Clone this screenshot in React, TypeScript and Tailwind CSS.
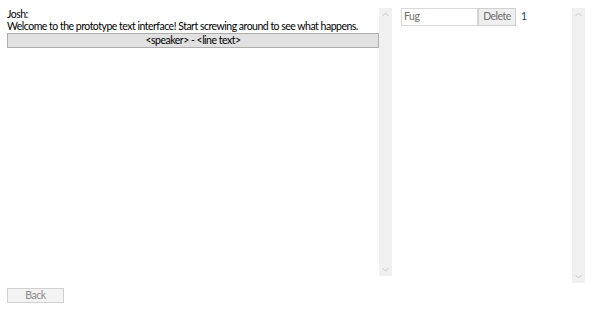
import React from "react";

const ScrollBar = ({ className }: { className: string }) => (
  <div className={`flex flex-col justify-between items-center bg-[#f0f0f0] w-[13px] shrink-0 ${className}`}>
    <svg width="7" height="5" viewBox="0 0 7 5" className="mt-[4px]">
      <path d="M0.5 4 L3.5 1 L6.5 4" fill="none" stroke="#c8c8c8" strokeWidth="1" />
    </svg>
    <svg width="7" height="5" viewBox="0 0 7 5" className="mb-[4px]">
      <path d="M0.5 1 L3.5 4 L6.5 1" fill="none" stroke="#c8c8c8" strokeWidth="1" />
    </svg>
  </div>
);

export default function App() {
  return (
    <div className="w-[600px] h-[315px] bg-white overflow-hidden font-['Lato',sans-serif] text-[10.5px] tracking-[-0.5px] text-black">
      <div className="flex pt-[8px] pl-[7px]">
        {/* dialogue panel */}
        <div className="flex">
          <div className="w-[372px] h-[268px] flex flex-col">
            <div className="leading-[12px]">Josh:</div>
            <div className="leading-[13px] whitespace-nowrap">Welcome to the prototype text interface! Start screwing around to see what happens.</div>
            <div className="h-[15px] bg-[#e1e1e1] border border-[#adadad] flex items-center justify-center leading-none">
              &lt;speaker&gt; - &lt;line text&gt;
            </div>
          </div>
          <ScrollBar className="h-[268px]" />
        </div>

        {/* variables panel */}
        <div className="flex ml-[9px]">
          <div className="w-[171px] h-[275px] flex items-start">
            <div className="flex items-center">
              <div className="w-[77px] h-[18px] border border-[#d9d9d9] text-[#6d6d6d] px-[2px] leading-[15px]">Fug</div>
              <div className="w-[38px] h-[18px] bg-[#efefef] border border-[#d0d0d0] text-[#6d6d6d] flex items-center justify-center">Delete</div>
              <div className="ml-[5px] text-[#1b3e6e]">1</div>
            </div>
          </div>
          <ScrollBar className="h-[275px]" />
        </div>
      </div>

      <div className="pl-[7px] mt-[5px]">
        <div className="w-[57px] h-[15px] bg-[#f3f3f3] border border-[#d0d0d0] text-[#8a8a8a] flex items-center justify-center">Back</div>
      </div>
    </div>
  );
}
